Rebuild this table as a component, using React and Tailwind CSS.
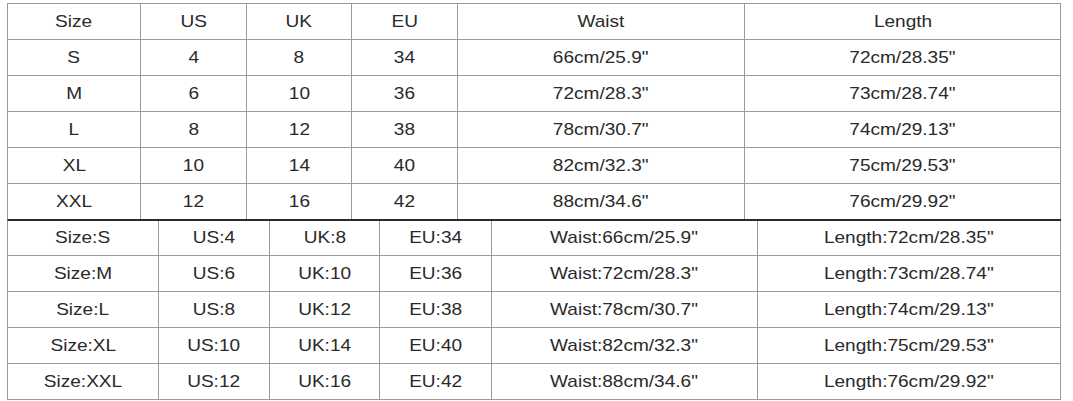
import React from "react";

const top = [
  ["Size", "US", "UK", "EU", "Waist", "Length"],
  ["S", "4", "8", "34", "66cm/25.9\"", "72cm/28.35\""],
  ["M", "6", "10", "36", "72cm/28.3\"", "73cm/28.74\""],
  ["L", "8", "12", "38", "78cm/30.7\"", "74cm/29.13\""],
  ["XL", "10", "14", "40", "82cm/32.3\"", "75cm/29.53\""],
  ["XXL", "12", "16", "42", "88cm/34.6\"", "76cm/29.92\""],
];

const bottom = [
  ["Size:S", "US:4", "UK:8", "EU:34", "Waist:66cm/25.9\"", "Length:72cm/28.35\""],
  ["Size:M", "US:6", "UK:10", "EU:36", "Waist:72cm/28.3\"", "Length:73cm/28.74\""],
  ["Size:L", "US:8", "UK:12", "EU:38", "Waist:78cm/30.7\"", "Length:74cm/29.13\""],
  ["Size:XL", "US:10", "UK:14", "EU:40", "Waist:82cm/32.3\"", "Length:75cm/29.53\""],
  ["Size:XXL", "US:12", "UK:16", "EU:42", "Waist:88cm/34.6\"", "Length:76cm/29.92\""],
];

function Cell({ children, className }) {
  return (
    <div className={"flex items-center justify-center border-r border-[#9a9a9a] " + className}>
      <span className="inline-block scale-x-[1.12] whitespace-nowrap">{children}</span>
    </div>
  );
}

export default function App() {
  return (
    <div
      className="w-[1073px] h-[401px] bg-white pt-[3px] pl-[7px] text-[17px] text-[#2a2a2a]"
      style={{ fontFamily: '"Liberation Sans", Arial, sans-serif' }}
    >
      <div className="w-[1054px] border-l border-t border-[#9a9a9a] grid grid-cols-[133px_106px_105px_106px_287px_316px]">
        {top.map((row, ri) =>
          row.map((c, ci) => (
            <Cell
              key={ri + "-" + ci}
              className={ri === top.length - 1 ? "h-[35px]" : "h-[36px] border-b"}
            >
              {c}
            </Cell>
          ))
        )}
      </div>
      <div className="w-[1054px] border-l border-t-2 border-l-[#9a9a9a] border-t-[#2a2a2a] grid grid-cols-[151px_111px_110px_112px_266px_303px]">
        {bottom.map((row, ri) =>
          row.map((c, ci) => (
            <Cell
              key={ri + "-" + ci}
              className={"border-b " + (ri === 0 ? "h-[35px]" : "h-[36px]")}
            >
              {c}
            </Cell>
          ))
        )}
      </div>
    </div>
  );
}
